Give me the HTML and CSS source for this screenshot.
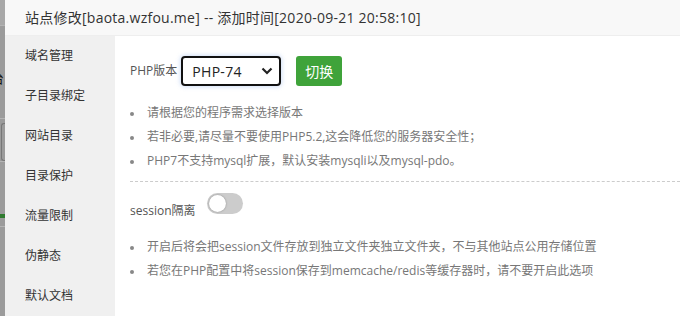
FILE: index.html
```html
<!DOCTYPE html>
<html lang="zh-CN">
<head>
  <meta charset="UTF-8" />
  <title>站点修改</title>
  <link rel="stylesheet" href="styles.css">
</head>
<body>
  <div class="page">
    <div class="shade">
      <div class="shade-top"></div>
      <div class="shade-line"></div>
      <div class="shade-glyph">台</div>
      <div class="shade-line"></div>
      <div class="shade-box"></div>
      <div class="shade-line"></div>
      <div class="shade-arrow"></div>
      <div class="shade-line"></div>
    </div>

    <div class="layer">
      <div class="layer-title">站点修改[baota.wzfou.me] -- 添加时间[2020-09-21 20:58:10]</div>
      <div class="layer-body">
        <ul class="side-menu">
          <li>域名管理</li>
          <li>子目录绑定</li>
          <li>网站目录</li>
          <li>目录保护</li>
          <li>流量限制</li>
          <li>伪静态</li>
          <li>默认文档</li>
        </ul>

        <div class="main">
          <div class="php-row">
            <span class="label">PHP版本</span>
            <div class="select">
              <span>PHP-74</span>
              <svg width="12" height="8" viewBox="0 0 12 8"><path d="M1.5 1.5 L6 6 L10.5 1.5" fill="none" stroke="#222" stroke-width="2.2"/></svg>
            </div>
            <button class="btn-green">切换</button>
          </div>

          <ul class="help">
            <li>请根据您的程序需求选择版本</li>
            <li>若非必要,请尽量不要使用PHP5.2,这会降低您的服务器安全性；</li>
            <li>PHP7不支持mysql扩展，默认安装mysqli以及mysql-pdo。</li>
          </ul>

          <div class="divider"></div>

          <div class="session-row">
            <span class="label">session隔离</span>
            <div class="toggle"><div class="knob"></div></div>
          </div>

          <ul class="help session-help">
            <li>开启后将会把session文件存放到独立文件夹独立文件夹，不与其他站点公用存储位置</li>
            <li>若您在PHP配置中将session保存到memcache/redis等缓存器时，请不要开启此选项</li>
          </ul>
        </div>
      </div>
    </div>
  </div>
</body>
</html>
```

FILE: styles.css
```css
* {
  margin: 0;
  padding: 0;
  box-sizing: border-box;
}

body {
  width: 680px;
  height: 316px;
  overflow: hidden;
  font-family: "Open Sans", "Noto Sans CJK SC", sans-serif;
  color: #333;
  background: #fff;
}

.page {
  display: flex;
  height: 316px;
}

/* dimmed panel behind the dialog */
.shade {
  width: 5px;
  background: #9b9b9b;
  display: flex;
  flex-direction: column;
  overflow: hidden;
}

.shade-top {
  height: 25px;
  background: #a8a8a8;
}

.shade-line {
  height: 1px;
  background: #b4b4b4;
}

.shade-glyph {
  height: 92px;
  padding-top: 44px;
  margin-left: -9px;
  font-size: 13px;
  line-height: 16px;
  color: #111;
}

.shade-box {
  height: 38px;
  margin: 4px 0 0 1px;
  border: 1px solid #777;
  border-right: none;
  border-radius: 3px 0 0 3px;
}

.shade-arrow {
  height: 64px;
  background: linear-gradient(#9b9b9b 52px, #2f7a2f 52px, #2f7a2f 56px, #9b9b9b 56px);
}

.layer {
  flex: 1;
  display: flex;
  flex-direction: column;
  background: #fff;
}

.layer-title {
  height: 36px;
  padding-left: 20px;
  line-height: 35px;
  font-size: 14px;
  letter-spacing: 0.25px;
  color: #333;
  background: #f8f8f8;
  border-bottom: 1px solid #eee;
  white-space: nowrap;
}

.layer-body {
  flex: 1;
  display: flex;
}

.side-menu {
  width: 110px;
  list-style: none;
  background: #f0f0f0;
}

.side-menu li {
  height: 40px;
  line-height: 40px;
  padding-left: 20px;
  font-size: 12px;
  color: #333;
}

.main {
  flex: 1;
  padding: 20px 0 0 15px;
}

.php-row {
  display: flex;
  align-items: center;
  height: 30px;
}

.label {
  font-size: 12px;
  color: #555;
  line-height: 20px;
}

.select {
  width: 100px;
  height: 30px;
  margin-left: 4px;
  padding: 0 6px 0 9px;
  display: flex;
  align-items: center;
  justify-content: space-between;
  border: 2px solid #111;
  border-radius: 4px;
  box-shadow: 0 0 4px 1px rgba(120, 160, 230, 0.35);
  font-size: 14px;
  letter-spacing: 0.3px;
  color: #222;
}

.btn-green {
  width: 46px;
  height: 30px;
  margin-left: 15px;
  border: none;
  border-radius: 3px;
  background: #3fa33a;
  color: #fff;
  font-family: inherit;
  font-size: 14px;
}

.help {
  margin-top: 15px;
  list-style: none;
}

.help li {
  position: relative;
  height: 24px;
  line-height: 24px;
  padding-left: 17px;
  font-size: 12px;
  color: #777;
  white-space: nowrap;
}

.help li::before {
  content: "";
  position: absolute;
  left: 0;
  top: 11px;
  width: 4px;
  height: 4px;
  border-radius: 50%;
  background: #888;
}

.divider {
  margin-top: 8px;
  border-top: 1px dashed #ccc;
}

.session-row {
  display: flex;
  align-items: flex-end;
  margin-top: 11px;
}

.toggle {
  width: 36px;
  height: 21px;
  margin: 0 0 7px 11px;
  padding: 2px;
  border-radius: 11px;
  background: #ccc;
}

.knob {
  width: 17px;
  height: 17px;
  border-radius: 50%;
  background: #fff;
  box-shadow: 0 0 2px rgba(0, 0, 0, 0.35);
}

.session-help {
  margin-top: 14px;
}
```
